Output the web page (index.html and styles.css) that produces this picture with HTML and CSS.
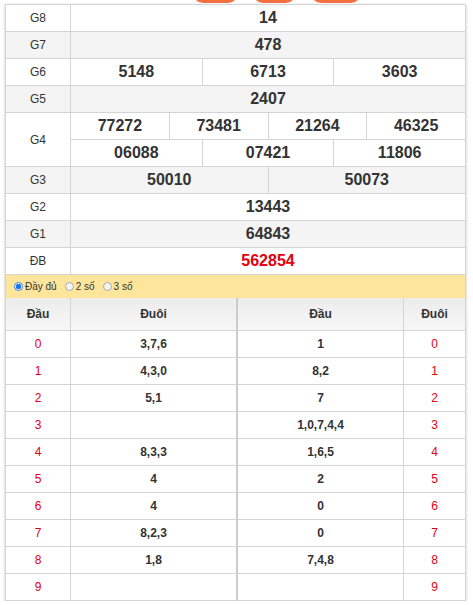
FILE: index.html
```html
<!DOCTYPE html>
<html lang="vi">
<head>
<meta charset="utf-8">
<link rel="stylesheet" href="styles.css">
</head>
<body>
<div class="page">
  <div class="tabs"><span class="tab t1"></span><span class="tab t2"></span><span class="tab t3"></span></div>
  <div class="box">
    <div class="prize">
      <div class="lbl">G8</div><div class="val s12">14</div>
      <div class="lbl alt">G7</div><div class="val s12 alt">478</div>
      <div class="lbl">G6</div><div class="val s4">5148</div><div class="val s4">6713</div><div class="val s4">3603</div>
      <div class="lbl alt">G5</div><div class="val s12 alt">2407</div>
      <div class="lbl r2">G4</div><div class="val s3">77272</div><div class="val s3">73481</div><div class="val s3">21264</div><div class="val s3">46325</div>
      <div class="val s4">06088</div><div class="val s4">07421</div><div class="val s4">11806</div>
      <div class="lbl alt">G3</div><div class="val s6 alt">50010</div><div class="val s6 alt">50073</div>
      <div class="lbl">G2</div><div class="val s12">13443</div>
      <div class="lbl alt">G1</div><div class="val s12 alt">64843</div>
      <div class="lbl">ĐB</div><div class="val s12 red">562854</div>
    </div>
    <div class="opts">
      <span class="opt"><span class="radio on"></span>Đầy đủ</span>
      <span class="opt"><span class="radio"></span>2 số</span>
      <span class="opt"><span class="radio"></span>3 số</span>
    </div>
    <div class="loto">
      <div class="hd">Đầu</div><div class="hd mid">Đuôi</div><div class="hd">Đầu</div><div class="hd">Đuôi</div>
      <div class="num">0</div><div class="tx mid">3,7,6</div><div class="tx">1</div><div class="num">0</div>
      <div class="num">1</div><div class="tx mid">4,3,0</div><div class="tx">8,2</div><div class="num">1</div>
      <div class="num">2</div><div class="tx mid">5,1</div><div class="tx">7</div><div class="num">2</div>
      <div class="num">3</div><div class="tx mid"></div><div class="tx">1,0,7,4,4</div><div class="num">3</div>
      <div class="num">4</div><div class="tx mid">8,3,3</div><div class="tx">1,6,5</div><div class="num">4</div>
      <div class="num">5</div><div class="tx mid">4</div><div class="tx">2</div><div class="num">5</div>
      <div class="num">6</div><div class="tx mid">4</div><div class="tx">0</div><div class="num">6</div>
      <div class="num">7</div><div class="tx mid">8,2,3</div><div class="tx">0</div><div class="num">7</div>
      <div class="num">8</div><div class="tx mid">1,8</div><div class="tx">7,4,8</div><div class="num">8</div>
      <div class="num">9</div><div class="tx mid"></div><div class="tx"></div><div class="num">9</div>
    </div>
  </div>
</div>
</body>
</html>
```

FILE: styles.css
```css
* { box-sizing: border-box; }
html, body { margin: 0; padding: 0; background: #fff; }
body { font-family: "Liberation Sans", Arial, sans-serif; color: #333; }

.page { padding-left: 5px; width: 466px; }

.tabs {
  height: 4px;
  display: flex;
  align-items: flex-end;
  overflow: hidden;
  padding-left: 188px;
  gap: 15px;
}
.tab {
  display: block;
  height: 20px;
  margin-bottom: 1px;
  background: #f2703f;
  border-radius: 0 0 10px 10px;
}
.t1 { width: 45px; }
.t2 { width: 43px; }
.t3 { width: 50px; }

.box {
  width: 461px;
  border-top: 1px solid #d4d4d4;
  border-left: 1px solid #d4d4d4;
  box-shadow: 0 1px 3px rgba(0, 0, 0, 0.22);
}

.prize {
  display: grid;
  grid-template-columns: 65px repeat(12, 1fr);
  grid-auto-rows: 27px;
}
.lbl, .val {
  display: flex;
  align-items: center;
  justify-content: center;
  border-right: 1px solid #d4d4d4;
  border-bottom: 1px solid #d4d4d4;
  background: #fff;
}
.lbl { font-size: 12px; color: #333; }
.val { font-size: 16px; font-weight: bold; color: #333; }
.alt { background: #f4f4f4; }
.r2 { grid-row: span 2; }
.s12 { grid-column: span 12; }
.s6 { grid-column: span 6; }
.s4 { grid-column: span 4; }
.s3 { grid-column: span 3; }
.red { color: #e3000f; }

.opts {
  height: 23px;
  background: #fde59b;
  display: flex;
  align-items: center;
  padding-left: 8px;
  gap: 8px;
  font-size: 10px;
  color: #333;
  border-right: 1px solid #e9d59a;
}
.opt { display: flex; align-items: center; gap: 2px; }
.radio {
  width: 9px;
  height: 9px;
  border-radius: 50%;
  border: 1px solid #a9a9a9;
  background: #f4f4f4;
}
.radio.on {
  border-color: #3b7ff0;
  background: radial-gradient(circle, #1a73e8 0 2.6px, #fff 3px);
}

.loto {
  display: grid;
  grid-template-columns: 65px 167px 166px 62px;
  grid-template-rows: 33px;
  grid-auto-rows: 27px;
}
.hd, .num, .tx {
  display: flex;
  align-items: center;
  justify-content: center;
  border-right: 1px solid #d4d4d4;
  border-bottom: 1px solid #d4d4d4;
  font-size: 12px;
}
.hd {
  font-weight: bold;
  color: #333;
  background: linear-gradient(#ececec, #f7f7f7);
}
.num { color: #e3000f; }
.tx { color: #333; font-weight: bold; }
.mid { border-right: 2px solid #cccccc; }
```
